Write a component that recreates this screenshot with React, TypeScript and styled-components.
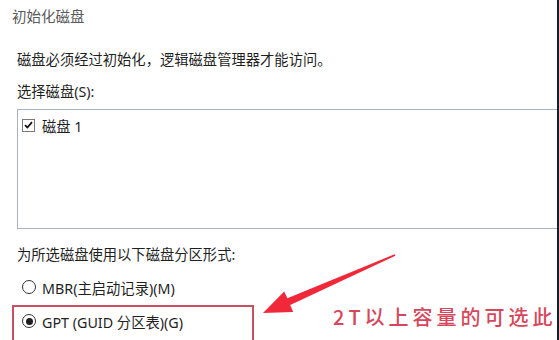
import styled, { createGlobalStyle } from "styled-components";

const Global = createGlobalStyle`
  html, body {
    margin: 0;
    padding: 0;
    background: #ffffff;
  }
  body {
    font-family: "Noto Sans", "Noto Sans CJK SC", sans-serif;
  }
`;

const Window = styled.div`
  position: relative;
  width: 559px;
  height: 340px;
  box-sizing: border-box;
  border-right: 2px solid #1c1c28;
  background: #ffffff;
  overflow: hidden;
  display: flex;
  flex-direction: column;
  color: #1f1f1f;
  font-size: 14px;
  & > * {
    flex-shrink: 0;
  }
`;

const Title = styled.div`
  height: 32px;
  line-height: 32px;
  padding-left: 12px;
  font-size: 14.5px;
  color: #5a5a5a;
`;

const Line = styled.div<{ $top: number; $indent?: number }>`
  height: 24px;
  line-height: 24px;
  margin-top: ${(p) => p.$top}px;
  padding-left: ${(p) => p.$indent ?? 17}px;
  font-size: 14.3px;
  white-space: nowrap;
`;

const DiskList = styled.div`
  margin-top: 5px;
  margin-left: 17px;
  height: 120px;
  box-sizing: border-box;
  border: 1px solid #a8b2c0;
  border-right: none;
  padding: 7px 0 0 4px;
`;

const DiskItem = styled.label`
  display: flex;
  align-items: center;
  gap: 7px;
  height: 16px;
  font-size: 14.3px;
`;

const Check = styled.span`
  width: 13px;
  height: 13px;
  box-sizing: border-box;
  border: 1px solid #7a7a7a;
  display: flex;
  align-items: center;
  justify-content: center;
`;

const Option = styled.div`
  display: flex;
  align-items: center;
  gap: 6px;
  height: 24px;
  padding-left: 22px;
  font-size: 14.3px;
  white-space: nowrap;
`;

const Radio = styled.span<{ $on?: boolean }>`
  width: 14px;
  height: 14px;
  box-sizing: border-box;
  border-radius: 50%;
  border: 1px solid #333;
  display: flex;
  align-items: center;
  justify-content: center;
  &::after {
    content: "";
    width: 7px;
    height: 7px;
    border-radius: 50%;
    background: ${(p) => (p.$on ? "#1f1f1f" : "transparent")};
  }
`;

const Highlight = styled.div`
  margin-top: 6px;
  margin-left: 12px;
  width: 242px;
  height: 40px;
  box-sizing: border-box;
  border: 2px solid #c9505f;
  border-bottom: none;
  padding-top: 2px;
  & > ${Option} {
    padding-left: 8px;
  }
`;

const Overlay = styled.svg`
  position: absolute;
  inset: 0;
  pointer-events: none;
`;

const Note = styled.div`
  position: absolute;
  left: 333px;
  top: 304px;
  font-family: "Noto Sans CJK SC", sans-serif;
  font-size: 20px;
  font-weight: 500;
  letter-spacing: 4px;
  color: #d6475c;
  white-space: nowrap;
  line-height: 26px;
`;

export default function App() {
  return (
    <>
      <Global />
      <Window>
        <Title>初始化磁盘</Title>
        <Line $top={16}>磁盘必须经过初始化，逻辑磁盘管理器才能访问。</Line>
        <Line $top={8}>选择磁盘(S):</Line>
        <DiskList>
          <DiskItem>
            <Check>
              <svg width="9" height="8" viewBox="0 0 9 8">
                <path d="M1 4.2 L3.4 6.5 L8 1.2" fill="none" stroke="#111" strokeWidth="1.8" />
              </svg>
            </Check>
            磁盘 1
          </DiskItem>
        </DiskList>
        <Line $top={14}>为所选磁盘使用以下磁盘分区形式:</Line>
        <Option style={{ marginTop: 8 }}>
          <Radio />
          MBR(主启动记录)(M)
        </Option>
        <Highlight>
          <Option>
            <Radio $on />
            GPT (GUID 分区表)(G)
          </Option>
        </Highlight>
        <Overlay width="559" height="340" viewBox="0 0 559 340">
          <polygon
            points="394.6,254.3 287.4,298.3 284.2,291.4 263,313 293.2,311.9 290.2,304.9 395.4,255.7"
            fill="#f0283a"
          />
        </Overlay>
        <Note>2T以上容量的可选此项</Note>
      </Window>
    </>
  );
}
